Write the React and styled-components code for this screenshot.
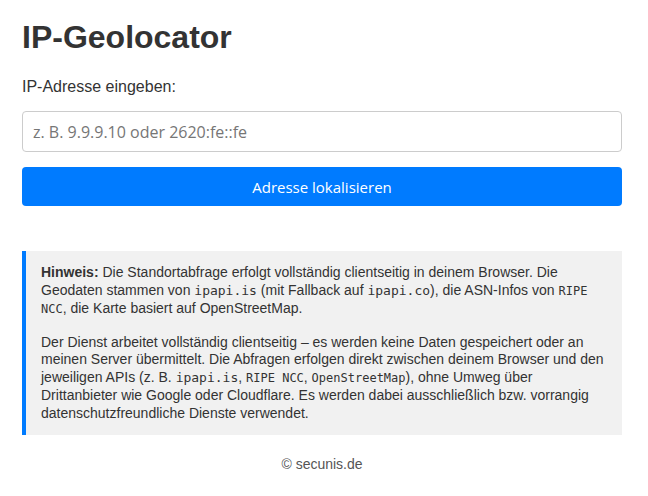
import React from 'react';
import styled, { createGlobalStyle } from 'styled-components';

const GlobalStyle = createGlobalStyle`
  body {
    margin: 0;
    background: #fff;
    font-family: "Liberation Sans", Arial, sans-serif;
    color: #333;
  }
`;

const Page = styled.div`
  width: 600px;
  padding: 19px 22px 0;
`;

const Title = styled.h1`
  margin: 0;
  font-size: 32px;
  font-weight: bold;
  line-height: 37px;
  color: #333;
`;

const Label = styled.label`
  display: block;
  margin-top: 22px;
  font-size: 16px;
  line-height: 18px;
  color: #333;
`;

const Input = styled.input`
  display: block;
  box-sizing: border-box;
  width: 100%;
  height: 41px;
  margin-top: 15px;
  padding: 0 10px;
  border: 1px solid #ccc;
  border-radius: 4px;
  font-family: "Open Sans", "Noto Sans", sans-serif;
  font-size: 16px;
  color: #333;
  outline: none;
  &::placeholder {
    color: #767676;
  }
`;

const Button = styled.button`
  display: block;
  width: 100%;
  height: 39px;
  margin-top: 15px;
  border: none;
  border-radius: 4px;
  background: #007bff;
  color: #fff;
  font-family: "Open Sans", "Noto Sans", sans-serif;
  font-size: 15px;
  cursor: pointer;
`;

const Notice = styled.div`
  margin-top: 45px;
  background: #f1f1f1;
  border-left: 4px solid #007bff;
  padding: 13px 15px;
  font-size: 14px;
  line-height: 17.5px;
  color: #333;
`;

const Para = styled.p`
  margin: 0;
  & + & {
    margin-top: 15px;
  }
`;

const Code = styled.code`
  font-family: "DejaVu Sans Mono", "Liberation Mono", monospace;
  font-size: ${(p) => (p.small ? '12px' : '13px')};
`;

const Footer = styled.footer`
  margin-top: 21px;
  text-align: center;
  font-size: 14px;
  line-height: 17px;
  color: #555;
`;

export default function App() {
  return (
    <>
      <GlobalStyle />
      <Page>
        <Title>IP-Geolocator</Title>
        <Label htmlFor="ip">IP-Adresse eingeben:</Label>
        <Input id="ip" placeholder="z. B. 9.9.9.10 oder 2620:fe::fe" />
        <Button>Adresse lokalisieren</Button>
        <Notice>
          <Para>
            <strong>Hinweis:</strong> Die Standortabfrage erfolgt vollständig clientseitig in deinem
            Browser. Die Geodaten stammen von <Code>ipapi.is</Code> (mit Fallback auf{' '}
            <Code>ipapi.co</Code>), die ASN-Infos von <Code small>RIPE NCC</Code>, die Karte basiert
            auf OpenStreetMap.
          </Para>
          <Para>
            Der Dienst arbeitet vollständig clientseitig – es werden keine Daten gespeichert oder an
            meinen Server übermittelt. Die Abfragen erfolgen direkt zwischen deinem Browser und den
            jeweiligen APIs (z. B. <Code>ipapi.is</Code>, <Code small>RIPE NCC</Code>,{' '}
            <Code small>OpenStreetMap</Code>), ohne Umweg über Drittanbieter wie Google oder
            Cloudflare. Es werden dabei ausschließlich bzw. vorrangig datenschutzfreundliche Dienste
            verwendet.
          </Para>
        </Notice>
        <Footer>© secunis.de</Footer>
      </Page>
    </>
  );
}
